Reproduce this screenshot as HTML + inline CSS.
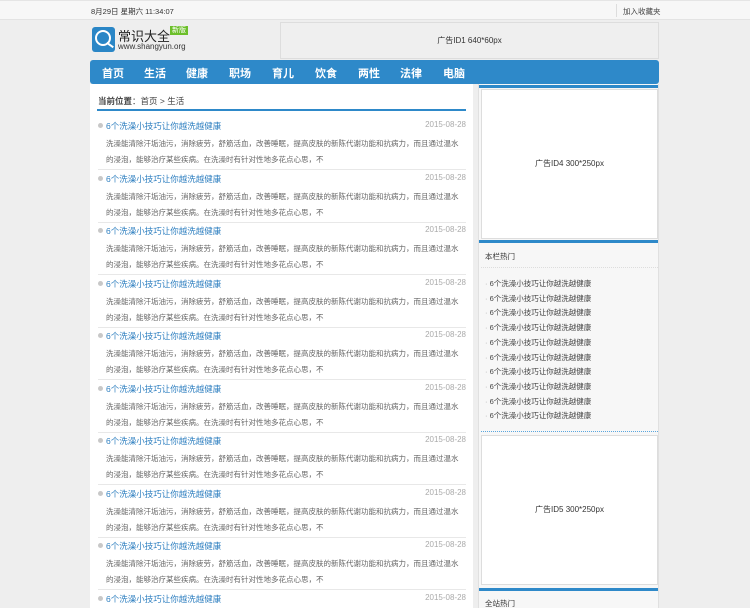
<!DOCTYPE html>
<html style="width:750px;height:608px;overflow:hidden;background:#eeeeee"><head><meta charset="utf-8"><style>
*{margin:0;padding:0;box-sizing:border-box}
body{width:750px;height:608px;overflow:hidden;background:#eeeeee;font-family:"Liberation Sans","Noto Sans CJK SC",sans-serif;font-size:8px;color:#333;position:relative}
.abs{position:absolute}
.top{left:0;top:0;width:750px;height:20px;background:#f7f7f7;border-top:1px solid #e5e5e5;border-bottom:1px solid #e3e3e3}
.nav{left:90px;top:60px;width:569px;height:24px;background:#2e89c9;border-radius:3px}
.nav span{position:absolute;top:5px;color:#fff;font-weight:bold;font-size:11px}
.left{left:90px;top:84px;width:383px;height:524px;background:#fff;overflow:hidden}
.item{position:absolute;left:8px;width:368px;height:50px}
.item .t{position:absolute;left:8px;top:0;color:#2e7fc0;font-size:8.5px}
.item .dot{position:absolute;left:0;top:3px;width:5px;height:5px;border-radius:50%;background:#c8c8c8}
.item .d{position:absolute;right:0;top:0;color:#aaa;font-size:8px}
.item .p{position:absolute;left:8px;top:16px;width:355px;line-height:16px;color:#666;font-size:7.5px}
.item .ln{position:absolute;left:0;top:49px;width:368px;border-top:1px solid #e8e8e8}
.right{left:478px;top:84px;width:181px;height:524px;background:#f7f7f7;border-left:1px solid #e0e0e0;border-right:1px solid #e0e0e0;overflow:hidden}
.adb{position:absolute;left:2px;width:177px;background:#fff;border:1px solid #ddd;text-align:center;font-size:8px;color:#333}
.bar{position:absolute;left:0;width:181px;height:3px;background:#2e89c9}
.hl{position:absolute;left:6px;font-size:7.5px;color:#444}
</style></head><body>
<div class="abs top">
<span class="abs" style="left:91px;top:5px;font-size:7.5px">8月29日 星期六 11:34:07</span>
<span class="abs" style="left:616px;top:3px;width:1px;height:13px;background:#ddd"></span>
<span class="abs" style="left:623px;top:5px;font-size:7.5px;color:#444">加入收藏夹</span>
</div>
<div class="abs" style="left:92px;top:27px;width:23px;height:25px;background:#2a86c6;border-radius:3px"><div style="position:absolute;left:3px;top:3px;width:16px;height:16px;border:2px solid #fff;border-radius:50%"></div><div style="position:absolute;left:14px;top:17px;width:8px;height:2px;background:#fff;transform:rotate(35deg)"></div></div>
<span class="abs" style="left:118px;top:26px;font-size:13px;color:#222">常识大全</span>
<span class="abs" style="left:170px;top:26px;background:#6cbf2a;color:#fff;font-size:7px;padding:0 2px;line-height:9px">新版</span>
<span class="abs" style="left:118px;top:42px;font-size:8px;color:#333">www.shangyun.org</span>
<div class="abs" style="left:280px;top:22px;width:379px;height:37px;background:#efefef;border:1px solid #ddd;text-align:center;line-height:35px;font-size:8px">广告ID1 640*60px</div>
<div class="abs nav">
<span style="left:12px">首页</span><span style="left:54px">生活</span><span style="left:96px">健康</span><span style="left:139px">职场</span><span style="left:182px">育儿</span><span style="left:225px">饮食</span><span style="left:268px">两性</span><span style="left:310px">法律</span><span style="left:353px">电脑</span>
</div>
<div class="abs left">
<div class="abs" style="left:8px;top:11px;font-size:8.5px;color:#444"><b>当前位置</b>：首页 &gt; 生活</div>
<div class="abs" style="left:7px;top:25px;width:369px;height:2px;background:#2e89c9"></div>
<div id="items"></div>
</div>
<div class="abs right">
<div class="bar" style="top:1px"></div>
<div class="adb" style="top:5px;height:150px;line-height:148px">广告ID4 300*250px</div>
<div class="bar" style="top:156px"></div>
<div class="hl" style="left:6px;top:167px;color:#333">本栏热门</div>
<div style="position:absolute;left:2px;top:183px;width:177px;border-top:1px dotted #ddd"></div>
<div id="hot"></div>
<div style="position:absolute;left:2px;top:347px;width:177px;border-top:1px dotted #5aa6dd"></div>
<div class="adb" style="top:351px;height:150px;line-height:148px">广告ID5 300*250px</div>
<div class="bar" style="top:504px"></div>
<div class="hl" style="left:6px;top:514px;color:#333">全站热门</div>
</div>
<script>
var h='';for(var i=0;i<10;i++){var y=36+i*52.5;h+='<div class="item" style="top:'+y+'px"><div class="dot"></div><div class="t">6个洗澡小技巧让你越洗越健康</div><div class="d">2015-08-28</div><div class="p">洗澡能清除汗垢油污，消除疲劳，舒筋活血，改善睡眠，提高皮肤的新陈代谢功能和抗病力，而且通过温水的浸泡，能够治疗某些疾病。在洗澡时有针对性地多花点心思，不</div><div class="ln"></div></div>';}
document.getElementById('items').innerHTML=h;
var k='';for(var j=0;j<10;j++){k+='<div class="hl" style="top:'+(194+j*14.7)+'px"><span style="color:#aaa">·</span> 6个洗澡小技巧让你越洗越健康</div>';}
document.getElementById('hot').innerHTML=k;
</script>
</body></html>
